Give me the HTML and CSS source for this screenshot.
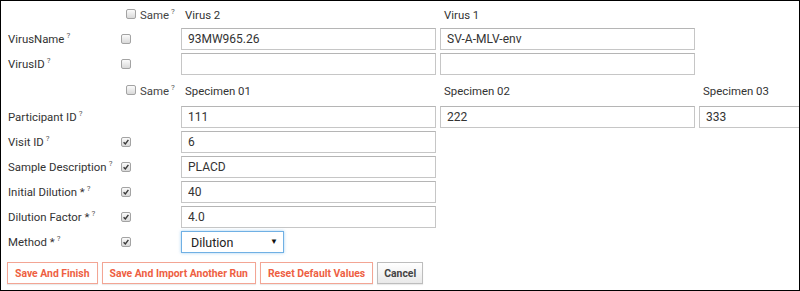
FILE: index.html
```html
<!DOCTYPE html>
<html>
<head>
    <title>Run Properties</title>
    <link rel="stylesheet" href="styles.css">
</head>
<body>
    <div class="frame">
        <table class="grid">
            <colgroup>
                <col class="c-label"><col class="c-same"><col class="c-val"><col class="c-val"><col class="c-val">
            </colgroup>
            <tr class="head">
                <td></td>
                <td class="same"><span class="cb"></span>Same<sup>?</sup></td>
                <td class="title">Virus 2</td>
                <td class="title">Virus 1</td>
                <td></td>
            </tr>
            <tr>
                <td class="label">VirusName<sup>?</sup></td>
                <td><span class="cb"></span></td>
                <td><input type="text" value="93MW965.26"></td>
                <td><input type="text" value="SV-A-MLV-env"></td>
                <td></td>
            </tr>
            <tr>
                <td class="label">VirusID<sup>?</sup></td>
                <td><span class="cb"></span></td>
                <td><input type="text" value=""></td>
                <td><input type="text" value=""></td>
                <td></td>
            </tr>
            <tr class="head tall">
                <td></td>
                <td class="same"><span class="cb"></span>Same<sup>?</sup></td>
                <td class="title">Specimen 01</td>
                <td class="title">Specimen 02</td>
                <td class="title">Specimen 03</td>
            </tr>
            <tr>
                <td class="label">Participant ID<sup>?</sup></td>
                <td></td>
                <td><input type="text" value="111"></td>
                <td><input type="text" value="222"></td>
                <td><input type="text" value="333"></td>
            </tr>
            <tr>
                <td class="label">Visit ID<sup>?</sup></td>
                <td><span class="cb on"><svg viewBox="0 0 10 10"><path d="M2 5.2 L4.2 7.4 L8 2.4"/></svg></span></td>
                <td><input type="text" value="6"></td>
                <td></td><td></td>
            </tr>
            <tr>
                <td class="label">Sample Description<sup>?</sup></td>
                <td><span class="cb on"><svg viewBox="0 0 10 10"><path d="M2 5.2 L4.2 7.4 L8 2.4"/></svg></span></td>
                <td><input type="text" value="PLACD"></td>
                <td></td><td></td>
            </tr>
            <tr>
                <td class="label">Initial Dilution *<sup>?</sup></td>
                <td><span class="cb on"><svg viewBox="0 0 10 10"><path d="M2 5.2 L4.2 7.4 L8 2.4"/></svg></span></td>
                <td><input type="text" value="40"></td>
                <td></td><td></td>
            </tr>
            <tr>
                <td class="label">Dilution Factor *<sup>?</sup></td>
                <td><span class="cb on"><svg viewBox="0 0 10 10"><path d="M2 5.2 L4.2 7.4 L8 2.4"/></svg></span></td>
                <td><input type="text" value="4.0"></td>
                <td></td><td></td>
            </tr>
            <tr>
                <td class="label">Method *<sup>?</sup></td>
                <td><span class="cb on"><svg viewBox="0 0 10 10"><path d="M2 5.2 L4.2 7.4 L8 2.4"/></svg></span></td>
                <td>
                    <span class="select-wrap">
                        <select><option>Dilution</option></select>
                    </span>
                </td>
                <td></td><td></td>
            </tr>
        </table>

        <div class="buttons">
            <button class="btn">Save And Finish</button>
            <button class="btn">Save And Import Another Run</button>
            <button class="btn">Reset Default Values</button>
            <button class="btn cancel">Cancel</button>
        </div>
    </div>
</body>
</html>
```

FILE: styles.css
```css
body { margin: 0; font-family: Roboto, "Liberation Sans", sans-serif; color: #333; }
.frame { width: 800px; height: 291px; box-sizing: border-box; border: 1px solid #000; overflow: hidden; }

.grid { table-layout: fixed; width: 957px; border-collapse: separate; border-spacing: 4px 3px; }
.grid td { padding: 0; height: 22px; vertical-align: middle; white-space: nowrap; }
.c-label { width: 112px; }
.c-same { width: 56px; }
.c-val { width: 255px; }

.grid tr.head td { height: 21px; }
.grid tr.head.tall td { height: 25px; }
.title { padding-left: 4px !important; font-size: 11.4px; color: #333; }
.same { padding-left: 5px !important; font-size: 11.4px; color: #444; }
.same .cb { margin-right: 4px; }
.label { padding-left: 3px !important; font-size: 11.4px; color: #333; }
sup { font-size: 8px; color: #555; vertical-align: top; position: relative; top: -1px; margin-left: 2px; }

.cb { display: inline-block; width: 10px; height: 10px; box-sizing: border-box; border: 1px solid #a3a3a3; border-radius: 2px; background: linear-gradient(#fbfbfb, #d9d9d9); vertical-align: middle; position: relative; top: -1px; }
.cb svg { display: block; width: 8px; height: 8px; }
.cb svg path { fill: none; stroke: #3a3a3a; stroke-width: 1.8; }

input[type="text"] { display: block; width: 255px; height: 22px; box-sizing: border-box; margin: 0; padding: 0 6px; border: 1px solid #c6c6c6; border-top-color: #b5b5b5; font-family: Roboto, "Liberation Sans", sans-serif; font-size: 12px; color: #333; background: #fff; }

.select-wrap { display: block; position: relative; width: 103px; }
.select-wrap::after { content: "\25BC"; position: absolute; right: 6px; top: 6px; font-size: 8px; color: #111; pointer-events: none; }
select { -webkit-appearance: none; appearance: none; display: block; width: 103px; height: 22px; box-sizing: border-box; margin: 0; padding: 0 9px; border: 1px solid #70b0e4; border-radius: 0; box-shadow: 0 0 3px rgba(102, 175, 233, 0.6); background: #fff; font-family: Roboto, "Liberation Sans", sans-serif; font-size: 12.5px; color: #222; outline: none; }

.buttons { display: flex; gap: 4px; margin: 6px 0 0 6px; }
.btn { height: 22px; box-sizing: border-box; margin: 0; padding: 0 7px; border: 1px solid #f3a594; background: #fff; color: #ee5f43; font-family: Roboto, "Liberation Sans", sans-serif; font-weight: bold; font-size: 10.4px; box-shadow: 0 1px 1px rgba(0, 0, 0, 0.08); cursor: pointer; }
.btn.cancel { padding: 0 6px; border-color: #bdbdbd; color: #444; background: linear-gradient(#ffffff, #e9e9e9); }
```
